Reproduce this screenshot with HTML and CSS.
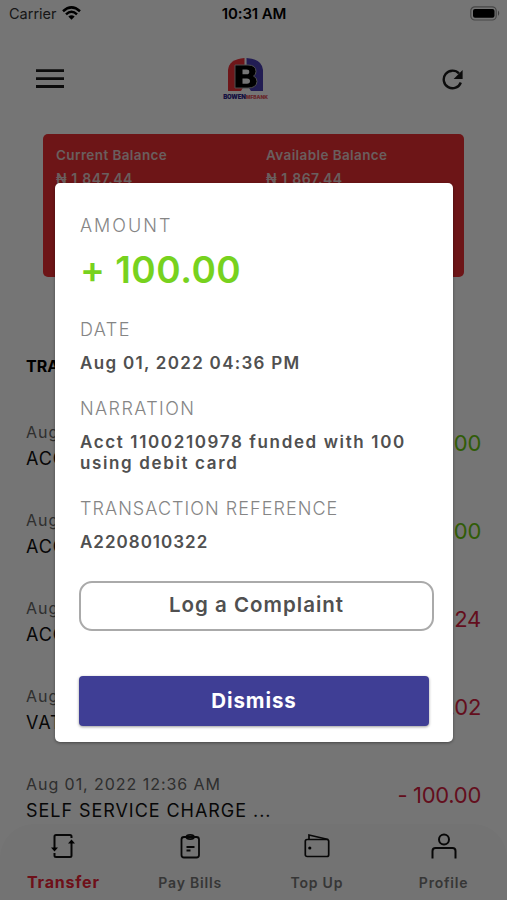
FILE: index.html
```html
<!DOCTYPE html>
<html lang="en">
<head>
<meta charset="utf-8">
<title>Transactions</title>
<link rel="stylesheet" href="styles.css">
</head>
<body>
<div class="screen">
  <div class="status">
    <div class="carrier"><span>Carrier</span>
      <svg width="19" height="14" viewBox="0 0 19 14"><g fill="none" stroke="#000" stroke-width="2.500"><path d="M1 5.200Q9.500-2.500 18 5.200"/><path d="M4 8.300Q9.500 3.200 15 8.300"/></g><path d="M6.300 10.600Q9.500 7.800 12.700 10.600L9.500 13.800Z"/></svg>
    </div>
    <div class="clock">10:31 AM</div>
    <svg class="battery" width="31" height="15" viewBox="0 0 31 15"><rect x=".8" y=".8" width="25.400" height="13.200" rx="4" fill="none" stroke="#999" stroke-width="1.200"/><rect x="3" y="3" width="21.500" height="8.800" rx="2"/><path d="M28 4.500q2.500 2.500 0 5.500z" fill="#888"/></svg>
  </div>
  <header class="header">
    <svg width="28" height="20" viewBox="0 0 28 20"><path d="M0 1.700h28M0 9.700h28M0 17.500h28" stroke="#1c1c1c" stroke-width="2.800"/></svg>
    <div class="logo">
      <svg width="36" height="34" viewBox="0 0 36 34"><path d="M0 33V12Q1 1 16.500 0V27L13 33Z" fill="#f03038"/><path d="M18.500 0Q34 1 35 12V33H23L19 27Z" fill="#4b3fb5"/><path d="M7 7H20Q28 7 28 13.500Q28 17 25.500 18Q29 19.500 29 23.500Q28.500 30 20 30H7Z" stroke="#aaa" stroke-width="1"/><path d="M14.500 11.500h4q2.800 0 2.800 2.400t-2.800 2.400h-4zM14.500 20.500h4.500q3 0 3 2.600t-3 2.600h-4.500z" fill="#fff"/></svg>
      <div class="brand"><span>BOWEN</span><b>MFBANK</b></div>
    </div>
    <svg width="22" height="22" viewBox="0 0 22 22"><path d="M18.800 13.500A8.800 8.800 0 1 1 17 4.500" fill="none" stroke="#1c1c1c" stroke-width="2.400"/><path d="M20.600 1v9h-9z" fill="#1c1c1c"/></svg>
  </header>
  <section class="balances">
    <div><div class="bal-label">Current Balance</div><div class="bal-value">₦ 1,847.44</div></div>
    <div><div class="bal-label">Available Balance</div><div class="bal-value">₦ 1,867.44</div></div>
  </section>
  <h2 class="heading">TRANSACTIONS</h2>
  <main class="list">
    <div class="row"><div><div class="when">Aug 01, 2022 04:36 PM</div><div class="what">ACCT 1100210978 ...</div></div><div class="sum in">+ 100.00</div></div>
    <div class="row"><div><div class="when">Aug 01, 2022 04:30 PM</div><div class="what">ACCT 1100210978 ...</div></div><div class="sum in">+ 100.00</div></div>
    <div class="row"><div><div class="when">Aug 01, 2022 12:36 AM</div><div class="what">ACCT CHARGE ...</div></div><div class="sum">- 0.24</div></div>
    <div class="row"><div><div class="when">Aug 01, 2022 12:36 AM</div><div class="what">VAT CHARGE ...</div></div><div class="sum">- 0.02</div></div>
    <div class="row"><div><div class="when">Aug 01, 2022 12:36 AM</div><div class="what">SELF SERVICE CHARGE ...</div></div><div class="sum">- 100.00</div></div>
  </main>
  <nav class="tabs">
    <div class="tab active"><svg width="26" height="26" viewBox="0 0 26 26"><g fill="none" stroke="#111" stroke-width="2"><path d="M4.500 16V3.500q0-1.500 1.500-1.500H20q1.500 0 1.500 1.500V5M21.500 9V22.500q0 1.500-1.500 1.500H6q-1.500 0-1.500-1.500V20"/></g><path d="M1 14.500h7L4.500 18.500ZM18 10.500h7L21.500 6.500Z"/></svg><span>Transfer</span></div>
    <div class="tab"><svg width="26" height="26" viewBox="0 0 26 26"><g fill="none" stroke="#111" stroke-width="1.800"><rect x="4.500" y="4" width="17.500" height="20.500" rx="2.500"/><ellipse cx="13.200" cy="4" rx="3.800" ry="2.100"/><path d="M9.500 14h8M9.500 17.500h4"/></g></svg><span>Pay Bills</span></div>
    <div class="tab"><svg width="26" height="26" viewBox="0 0 26 26"><g fill="none" stroke="#111" stroke-width="1.700"><rect x="1.300" y="6.500" width="23.400" height="17" rx="1.800"/><path d="M5 6.500V2L24.300 6.500"/></g><circle cx="5.800" cy="15" r="1.600"/></svg><span>Top Up</span></div>
    <div class="tab"><svg width="26" height="26" viewBox="0 0 26 26"><g fill="none" stroke="#111" stroke-width="2"><circle cx="13" cy="6.500" r="5"/><path d="M1.500 25.500V18q0-3 3-3h17q3 0 3 3v7.500"/></g></svg><span>Profile</span></div>
  </nav>
  <div class="overlay">
    <div class="modal">
      <div class="label l-amount">AMOUNT</div>
      <div class="amount">+ 100.00</div>
      <div class="label l-date">DATE</div>
      <div class="value v-date">Aug 01, 2022 04:36 PM</div>
      <div class="label l-narr">NARRATION</div>
      <div class="value v-narr">Acct 1100210978 funded with 100<br>using debit card</div>
      <div class="label l-ref">TRANSACTION REFERENCE</div>
      <div class="value v-ref">A2208010322</div>
      <button class="complaint">Log a Complaint</button>
      <button class="dismiss">Dismiss</button>
    </div>
  </div>
</div>
</body>
</html>
```
FILE: styles.css
```css
* { box-sizing: border-box; }
body { margin: 0; font-family: Inter, "Liberation Sans", sans-serif; }
svg { display: block; flex: none; }
.screen { position: relative; width: 507px; height: 900px; overflow: hidden; background: #fff; display: flex; flex-direction: column; white-space: nowrap; }
.status { height: 27px; flex: none; display: grid; grid-template-columns: 1fr auto 1fr; align-items: center; padding: 0 6px 0 7px; font-size: 15px; }
.carrier { display: flex; align-items: center; gap: 5px; color: #333; font-size: 14.5px; padding-left: 2px; }
.carrier svg { margin-top: -2px; }
.clock { font-weight: 600; letter-spacing: -.1px; }
.battery { justify-self: end; }
.header { height: 107px; flex: none; display: flex; justify-content: space-between; align-items: flex-start; padding: 31px 43px 0 36px; }
.header > svg { margin-top: 11px; }
.logo { width: 46px; display: flex; flex-direction: column; align-items: center; margin-left: -15px; }
.brand { font-size: 6px; font-weight: 900; line-height: 10px; display: flex; color: #2c258c; letter-spacing: -.1px; }
.brand b { color: #e35a62; font-weight: 900; font-size: 5px; }
.balances { flex: none; height: 143px; margin: 0 43px; border-radius: 5px; background: #ed2e32; display: grid; grid-template-columns: 1fr 1fr; padding: 10px 0 0 13px; color: #e8cccc; font-weight: 600; column-gap: 12px; }
.bal-label { height: 23px; line-height: 23px; font-size: 13.5px; letter-spacing: .4px; }
.bal-value { height: 23px; line-height: 23px; font-size: 14px; letter-spacing: .5px; }
.heading { margin: 77px 0 0 26px; height: 24px; flex: none; line-height: 24px; font-size: 16px; font-weight: 700; }
.list { flex: none; height: 446px; margin: 42px 26px 0; }
.row { height: 88px; display: flex; justify-content: space-between; }
.when { height: 24px; line-height: 24px; font-size: 16px; color: #666; letter-spacing: .95px; }
.what { height: 30px; line-height: 30px; font-size: 18px; color: #111; letter-spacing: .95px; }
.sum { font-size: 22px; line-height: 47px; color: #d81f42; letter-spacing: -.3px; }
.sum.in { color: #69c90f; }
.tabs { position: absolute; left: 0; bottom: 0; width: 507px; height: 76px; background: #fafafa; border-radius: 34px 34px 0 0; display: grid; grid-template-columns: repeat(4, 1fr); }
.tab { display: flex; flex-direction: column; align-items: center; padding-top: 9px; font-size: 14px; font-weight: 600; color: #777; letter-spacing: .8px; }
.tab span { line-height: 20px; margin-top: 13.5px; }
.tab.active { color: #f02437; font-size: 16px; font-weight: 700; }
.tab.active span { margin-top: 13px; }
.overlay { position: absolute; inset: 0; background: rgba(0,0,0,.54); padding: 183px 54px 0 55px; }
.modal { height: 559px; background: #fff; border-radius: 5px; padding: 30px 19px 0 25px; display: flex; flex-direction: column; box-shadow: 0 1px 3px rgba(0,0,0,.4); }
.label { font-size: 18px; line-height: 26px; height: 26px; font-weight: 300; color: #858585; letter-spacing: 1.4px; }
.label.l-amount { letter-spacing: 2px; }
.amount { font-size: 37px; line-height: 48px; height: 63px; padding-top: 7px; font-weight: 600; color: #77d21e; letter-spacing: .5px; }
.l-date { margin-top: 15px; }
.value { font-size: 17px; line-height: 21px; font-weight: 600; color: #505050; letter-spacing: 1px; }
.value.v-date { margin-top: 10px; letter-spacing: 1.3px; }
.l-narr { margin-top: 22px; }
.value.v-narr { margin-top: 10px; letter-spacing: 1.63px; }
.label.l-ref { margin-top: 22px; letter-spacing: 1.05px; }
.v-ref { margin-top: 10px; }
button { font: inherit; border: 0; padding: 0; flex: none; }
.complaint { margin: 28px 0 0 -1px; height: 50px; width: 355px; border: 2px solid #aaa; border-radius: 13px; background: #fff; color: #505050; font-size: 20.5px; font-weight: 600; letter-spacing: 1px; line-height: 44px; padding-bottom: 2px; }
.dismiss { margin: 45px 0 0 -1px; height: 50px; width: 350px; border-radius: 4px; background: #3f3e95; color: #fff; font-size: 20.5px; font-weight: 700; letter-spacing: .9px; padding-bottom: 2px; box-shadow: 0 1px 3px rgba(0,0,0,.4); }
```
